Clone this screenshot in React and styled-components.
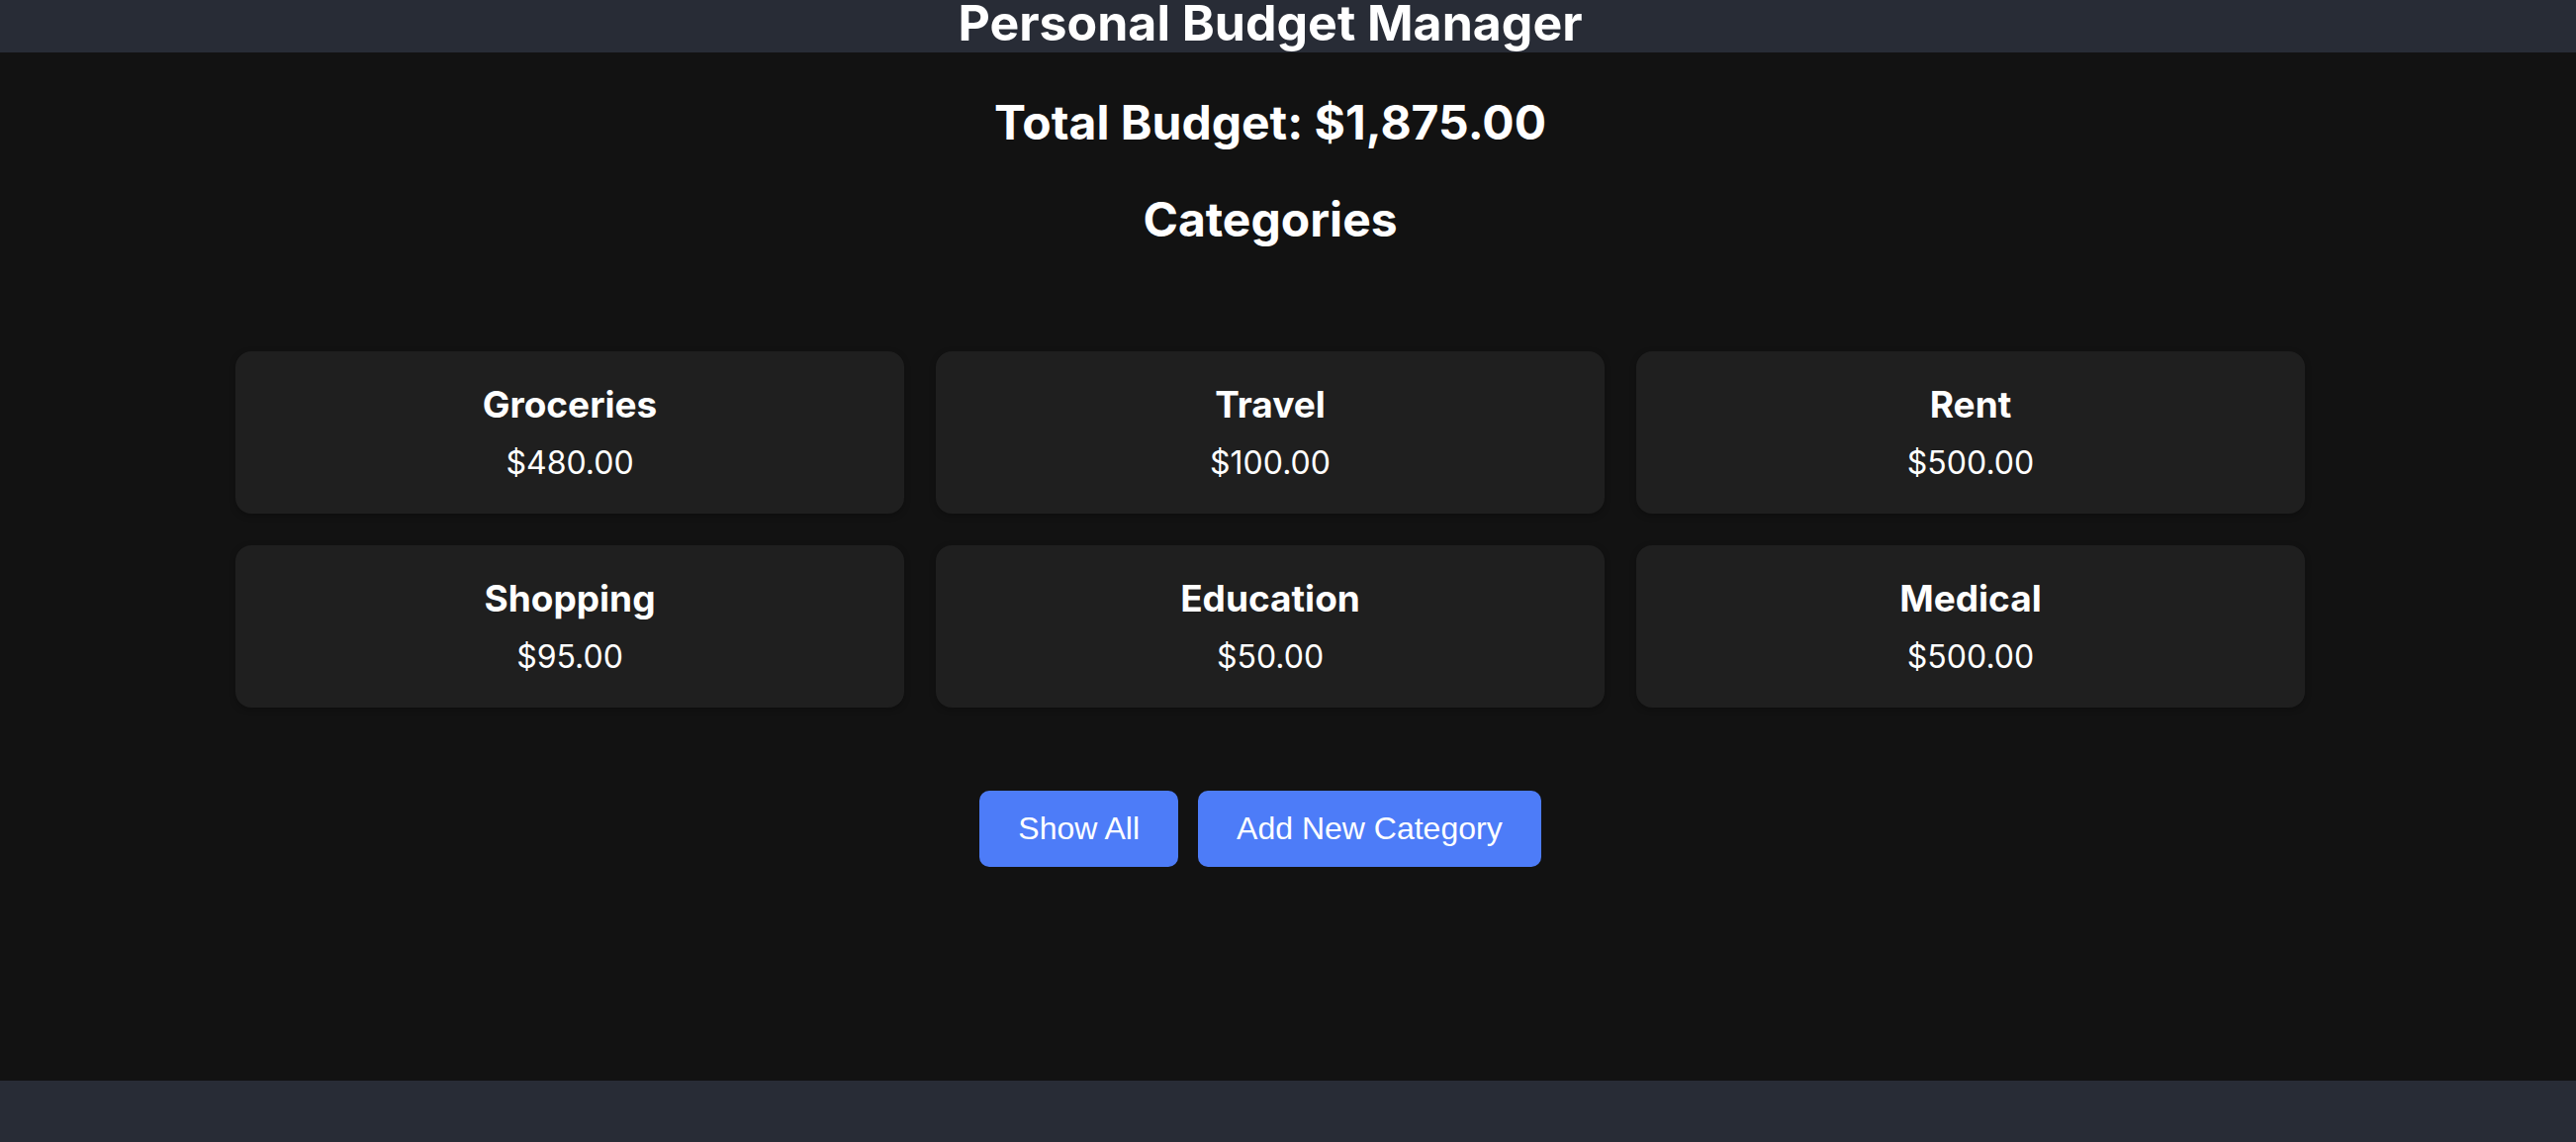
import React from 'react';
import styled, { createGlobalStyle } from 'styled-components';

const GlobalStyle = createGlobalStyle`
  html, body {
    margin: 0;
    padding: 0;
    background: #121212;
    color: #ffffff;
    font-family: Inter, "Noto Sans", sans-serif;
  }
`;

const Page = styled.div`
  min-height: 100vh;
  display: flex;
  flex-direction: column;
`;

const Header = styled.header`
  height: 53px;
  background: #282c36;
  display: flex;
  justify-content: center;
  align-items: flex-start;
  padding-right: 36px;
`;

const Title = styled.h1`
  margin: 0;
  font-size: 50px;
  line-height: 46px;
  font-weight: 700;
  white-space: nowrap;
`;

const Main = styled.main`
  flex: 1;
  display: flex;
  flex-direction: column;
  align-items: center;
  padding: 42px 36px 0 0;
`;

const Heading = styled.h2`
  margin: 0 0 ${({ $gap }) => $gap || 0}px;
  font-size: 48px;
  line-height: 1.2;
  font-weight: 700;
  text-align: center;
`;

const Grid = styled.div`
  display: grid;
  grid-template-columns: repeat(3, 676px);
  gap: 32px;
  margin-top: 105px;
`;

const Card = styled.div`
  height: 164px;
  box-sizing: border-box;
  background: #1f1f1f;
  border-radius: 16px;
  box-shadow: 0 2px 6px rgba(0, 0, 0, 0.25);
  display: flex;
  flex-direction: column;
  align-items: center;
  justify-content: center;
  gap: 17px;
`;

const CardName = styled.div`
  font-size: 37px;
  line-height: 1.2;
  font-weight: 700;
`;

const CardAmount = styled.div`
  font-size: 32px;
  line-height: 1.2;
  font-weight: 400;
`;

const Actions = styled.div`
  display: flex;
  justify-content: center;
  margin-top: 84px;
`;

const Button = styled.button`
  font-family: "Liberation Sans", Arial, sans-serif;
  font-size: 32px;
  color: #ffffff;
  background: #4d7cf8;
  border: none;
  border-radius: 10px;
  padding: 20px 39px;
  margin-right: 20px;
  cursor: pointer;
`;

const Footer = styled.footer`
  height: 62px;
  background: #282c36;
`;

const categories = [
  { name: 'Groceries', amount: 480 },
  { name: 'Travel', amount: 100 },
  { name: 'Rent', amount: 500 },
  { name: 'Shopping', amount: 95 },
  { name: 'Education', amount: 50 },
  { name: 'Medical', amount: 500 },
];

const fmt = (n) =>
  '$' + n.toLocaleString('en-US', { minimumFractionDigits: 2, maximumFractionDigits: 2 });

const App = () => {
  const total = categories.reduce((sum, c) => sum + c.amount, 0) + 150;

  return (
    <Page>
      <GlobalStyle />
      <Header>
        <Title>Personal Budget Manager</Title>
      </Header>
      <Main>
        <Heading $gap={40}>Total Budget: {fmt(total)}</Heading>
        <Heading>Categories</Heading>
        <Grid>
          {categories.map((c) => (
            <Card key={c.name}>
              <CardName>{c.name}</CardName>
              <CardAmount>{fmt(c.amount)}</CardAmount>
            </Card>
          ))}
        </Grid>
        <Actions>
          <Button>Show All</Button>
          <Button>Add New Category</Button>
        </Actions>
      </Main>
      <Footer />
    </Page>
  );
};

export default App;
